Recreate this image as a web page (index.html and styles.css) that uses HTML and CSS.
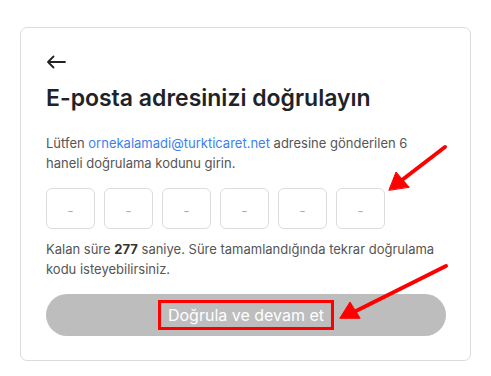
FILE: index.html
```html
<!DOCTYPE html>
<html lang="tr">
<head>
  <meta charset="UTF-8">
  <title>E-posta doğrulama</title>
  <link rel="stylesheet" href="styles.css">
</head>
<body>
  <div class="verify-card">
    <div class="verify-back">
      <svg width="20" height="14" viewBox="0 0 20 14" fill="none" stroke="#222" stroke-width="1.8" stroke-linecap="round" stroke-linejoin="round">
        <path d="M19 7H2M7.5 1.5L2 7l5.5 5.5"/>
      </svg>
    </div>
    <h1 class="verify-title">E-posta adresinizi doğrulayın</h1>
    <p class="verify-text">Lütfen <a class="verify-mail">ornekalamadi@turkticaret.net</a> adresine gönderilen 6 haneli doğrulama kodunu girin.</p>
    <div class="otp-row">
      <div class="otp-box">-</div>
      <div class="otp-box">-</div>
      <div class="otp-box">-</div>
      <div class="otp-box">-</div>
      <div class="otp-box">-</div>
      <div class="otp-box">-</div>
    </div>
    <p class="verify-text timer">Kalan süre <b>277</b> saniye. Süre tamamlandığında tekrar doğrulama kodu isteyebilirsiniz.</p>
    <button class="verify-btn"><span class="btn-mark">Doğrula ve devam et</span></button>
  </div>

  <!-- annotation arrows -->
  <svg class="annot" width="491" height="376" viewBox="0 0 491 376">
    <g stroke="#f00" stroke-width="4" stroke-linecap="round" fill="#f00">
      <line x1="445" y1="147" x2="402" y2="180"/>
      <polygon points="389,190 396,172 409,187" stroke-width="1"/>
      <line x1="446" y1="266" x2="356" y2="311"/>
      <polygon points="340,318 350,302 360,318" stroke-width="1"/>
    </g>
  </svg>
</body>
</html>
```

FILE: styles.css
```css
html, body {
  margin: 0;
  padding: 0;
  background: #fff;
  font-family: 'Inter', 'Noto Sans', sans-serif;
  color: #222;
}
body {
  width: 491px;
  height: 376px;
  position: relative;
  overflow: hidden;
}
.verify-card {
  box-sizing: border-box;
  margin: 27px 0 0 20px;
  width: 451px;
  height: 334px;
  border: 1px solid #dcdcdc;
  border-radius: 7px;
  padding: 24px 25px 0 25px;
}
.verify-back {
  height: 20px;
  display: flex;
  align-items: center;
  margin-bottom: 11px;
}
.verify-title {
  margin: 0;
  font-size: 23px;
  font-weight: 600;
  color: #1f2328;
  line-height: 30px;
}
.verify-text {
  margin: 20px 0 0 0;
  font-size: 13px;
  line-height: 20px;
  color: #555;
}
.verify-mail {
  color: #3d7ff0;
  text-decoration: none;
}
.otp-row {
  display: flex;
  gap: 9px;
  margin-top: 15px;
}
.otp-box {
  box-sizing: border-box;
  width: 49px;
  height: 41px;
  border: 1px solid #dcdcdc;
  border-radius: 6px;
  display: flex;
  align-items: center;
  justify-content: center;
  color: #aaa;
  font-size: 13px;
  padding-top: 4px;
}
.verify-text.timer {
  margin-top: 10px;
}
.verify-text.timer b {
  color: #333;
}
.verify-btn {
  margin-top: 15px;
  width: 400px;
  height: 42px;
  border: none;
  border-radius: 21px;
  background: #bdbdbd;
  color: #fff;
  font-family: inherit;
  font-size: 16px;
  display: flex;
  align-items: center;
  justify-content: center;
  padding: 0;
}
.btn-mark {
  border: 3px solid #f00;
  padding: 2px 7px;
  line-height: 20px;
}
.annot {
  position: absolute;
  left: 0;
  top: 0;
  pointer-events: none;
}
```
